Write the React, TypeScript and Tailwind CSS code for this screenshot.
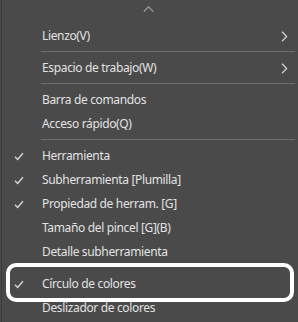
import type { ReactNode } from "react";

type Item =
  | { kind: "item"; label: string; checked?: boolean; submenu?: boolean }
  | { kind: "sep"; hidden?: boolean };

const items: Item[] = [
  { kind: "item", label: "Lienzo(V)", submenu: true },
  { kind: "sep" },
  { kind: "item", label: "Espacio de trabajo(W)", submenu: true },
  { kind: "sep" },
  { kind: "item", label: "Barra de comandos" },
  { kind: "item", label: "Acceso rápido(Q)" },
  { kind: "sep" },
  { kind: "item", label: "Herramienta", checked: true },
  { kind: "item", label: "Subherramienta [Plumilla]", checked: true },
  { kind: "item", label: "Propiedad de herram. [G]", checked: true },
  { kind: "item", label: "Tamaño del pincel [G](B)" },
  { kind: "item", label: "Detalle subherramienta" },
  { kind: "sep", hidden: true },
  { kind: "item", label: "Círculo de colores", checked: true },
  { kind: "item", label: "Deslizador de colores" },
];

function Check() {
  return (
    <svg width="10" height="9" viewBox="0 0 10 9" fill="none">
      <path d="M1 4.8 L3.6 7.5 L9 1.2" stroke="#d8d8d8" strokeWidth="1.4" />
    </svg>
  );
}

function Chevron() {
  return (
    <svg width="7" height="11" viewBox="0 0 7 11" fill="none">
      <path d="M1 0.8 L5.6 5.5 L1 10.2" stroke="#cfcfcf" strokeWidth="1.3" />
    </svg>
  );
}

function Row({ children }: { children: ReactNode }) {
  return <div className="flex h-[24px] items-center">{children}</div>;
}

export default function App() {
  return (
    <div
      className="relative h-[322px] w-[298px] overflow-hidden bg-[#4a4a4a] pl-[1px] text-[12px] tracking-[-0.35px] text-[#e2e2e2]"
      style={{ fontFamily: '"Noto Sans", "Open Sans", sans-serif' }}
    >
      <div className="flex h-full flex-col border-l border-[#3a3a3a]">
        <div className="flex h-[24px] justify-center pt-[6px] pr-[4px]">
          <svg width="11" height="6" viewBox="0 0 11 6" fill="none">
            <path d="M0.8 5.5 L5.5 0.8 L10.2 5.5" stroke="#9a9a9a" strokeWidth="1.3" />
          </svg>
        </div>
        {items.map((it, i) =>
          it.kind === "sep" ? (
            <div key={i} className="h-[8px] pt-[3px] pl-[39px] pr-[3px]">
              {!it.hidden && <div className="h-px bg-[#6e6e6e]" />}
            </div>
          ) : (
            <Row key={i}>
              <div className="flex w-[40px] justify-start pl-[12px]">
                {it.checked && <Check />}
              </div>
              <span className="flex-1 leading-none">{it.label}</span>
              {it.submenu && (
                <div className="pr-[10px]">
                  <Chevron />
                </div>
              )}
            </Row>
          )
        )}
      </div>
      <div className="absolute left-[6px] top-[263px] h-[39px] w-[288px] rounded-[10px] border-4 border-white" />
    </div>
  );
}
